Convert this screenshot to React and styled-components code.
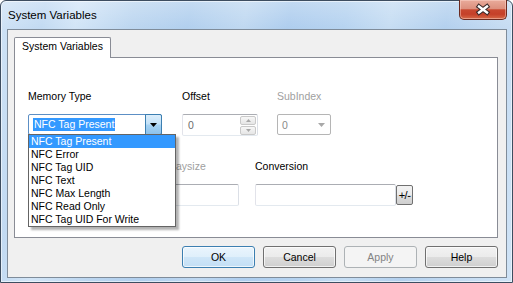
import React from "react";
import styled, { createGlobalStyle } from "styled-components";

const Global = createGlobalStyle`
  html, body { margin: 0; padding: 0; background: #ffffff; }
  body { font-family: "Liberation Sans", Arial, sans-serif; }
  * { box-sizing: border-box; }
`;

const Window = styled.div`
  position: relative;
  width: 513px;
  height: 283px;
  border: 1px solid #3d4d60;
  border-radius: 6px 6px 0 0;
  padding: 0 5px 4px 6px;
  display: flex;
  flex-direction: column;
  background:
    linear-gradient(180deg, rgba(255,255,255,0.25) 0px, rgba(255,255,255,0) 28px),
    linear-gradient(100deg,
      #cfe3f6 0%, #c2daf2 8%, #d2e5f7 14%, #bcd6f0 24%, #b1cfee 34%,
      #bfd8f1 44%, #aecdee 52%, #b6d3f0 62%, #c6ddf3 70%, #b3d0ee 80%, #c4dbf2 90%, #cfe3f6 100%);
  box-shadow: inset 0 0 0 1px rgba(255,255,255,0.55);
  font-size: 10.5px;
  color: #000;
`;

const TitleBar = styled.div`
  height: 28px;
  flex: none;
  display: flex;
  align-items: center;
  padding-left: 1px;
  font-size: 11.5px;
  color: #000;
`;

const CloseButton = styled.div`
  position: absolute;
  top: -1px;
  right: 5px;
  width: 48px;
  height: 20px;
  border: 1px solid #6b2a20;
  border-top: none;
  border-radius: 0 0 5px 5px;
  background: linear-gradient(180deg, #e9ab9b 0%, #dd907e 45%, #c8482f 52%, #c54029 75%, #d66a48 100%);
  box-shadow: inset 0 0 0 1px rgba(255, 220, 210, 0.45);
  display: flex;
  align-items: center;
  justify-content: center;
`;

const Client = styled.div`
  flex: 1;
  border: 1px solid #7f8c9a;
  background: #f0f0f0;
  display: flex;
  flex-direction: column;
  padding: 7px 8px 9px 6px;
`;

const Tab = styled.div`
  flex: 1;
  display: flex;
  flex-direction: column;
`;

const TabHeader = styled.div`
  align-self: flex-start;
  position: relative;
  z-index: 1;
  width: 97px;
  height: 21px;
  margin-bottom: -1px;
  border: 1px solid #898c95;
  border-bottom: none;
  border-radius: 2px 2px 0 0;
  background: #ffffff;
  padding: 2px 0 0 7px;
  line-height: 13px;
`;

const Panel = styled.div`
  flex: 1;
  border: 1px solid #898c95;
  background: #ffffff;
  padding: 32px 0 0 13px;
  display: flex;
  flex-direction: column;
`;

const Row = styled.div`
  display: flex;
  align-items: flex-start;
  margin-top: ${(p) => p.$top || 0}px;
`;

const Field = styled.div`
  position: relative;
  display: flex;
  flex-direction: column;
  width: ${(p) => p.$w}px;
  margin-left: ${(p) => p.$ml || 0}px;
`;

const Label = styled.div`
  line-height: 13px;
  height: 13px;
  margin-bottom: 11px;
  white-space: nowrap;
  color: ${(p) => (p.$disabled ? "#a0a0a0" : "#000")};
`;

const Combo = styled.div`
  position: relative;
  height: 21px;
  border: 1px solid ${(p) => (p.$disabled ? "#b5b5b5" : "#5c8fc5")};
  border-radius: 2px;
  background: #fff;
  display: flex;
  align-items: center;
  padding-left: 4px;
  color: ${(p) => (p.$disabled ? "#8a8a8a" : "#000")};
`;

const Selected = styled.span`
  background: #3399ff;
  color: #fff;
  line-height: 13px;
  padding: 0 1px;
`;

const ComboButton = styled.div`
  position: absolute;
  top: -1px;
  right: -1px;
  width: 17px;
  height: 21px;
  border: 1px solid #3c7fb1;
  border-radius: 0 2px 2px 0;
  background: linear-gradient(180deg, #dceefb 0%, #c2e1f8 48%, #a7d3f3 52%, #8cc2ec 100%);
  display: flex;
  align-items: center;
  justify-content: center;
`;

const PlainArrow = styled.div`
  position: absolute;
  right: 5px;
  top: 8px;
  display: flex;
`;

const DropList = styled.div`
  position: absolute;
  z-index: 5;
  top: 44px;
  left: 0;
  width: 148px;
  border: 1px solid #646464;
  background: #fff;
  box-shadow: 3px 3px 2px rgba(0, 0, 0, 0.3);
`;

const Item = styled.div`
  height: 13px;
  line-height: 13px;
  padding-left: 2px;
  white-space: nowrap;
  background: ${(p) => (p.$active ? "#3399ff" : "transparent")};
  color: ${(p) => (p.$active ? "#fff" : "#000")};
`;

const TextBox = styled.div`
  position: relative;
  height: 22px;
  border: 1px solid #abadb3;
  border-color: #abadb3 #dbdfe6 #e3e9ef #e2e3ea;
  border-radius: 2px;
  background: #fff;
  display: flex;
  align-items: center;
  padding-left: 5px;
  color: #6d6d6d;
  width: ${(p) => (p.$w ? p.$w + "px" : "auto")};
`;

const Spin = styled.div`
  position: absolute;
  right: 1px;
  top: 1px;
  width: 16px;
  display: flex;
  flex-direction: column;
  gap: 1px;
`;

const SpinBtn = styled.div`
  height: 9px;
  border: 1px solid #c9c9c9;
  border-radius: 2px;
  background: linear-gradient(180deg, #f7f7f7, #e6e6e6);
  display: flex;
  align-items: center;
  justify-content: center;
`;

const InputGroup = styled.div`
  display: flex;
  align-items: center;
`;

const SmallButton = styled.div`
  width: 17px;
  height: 20px;
  border: 1px solid #707070;
  border-radius: 2px;
  background: linear-gradient(180deg, #f2f2f2 0%, #ebebeb 50%, #dddddd 50%, #cfcfcf 100%);
  display: flex;
  align-items: center;
  justify-content: center;
  font-size: 11px;
  letter-spacing: -0.5px;
`;

const ButtonRow = styled.div`
  flex: none;
  display: flex;
  justify-content: flex-end;
  gap: 8px;
  margin-top: 8px;
`;

const Button = styled.div`
  width: 73px;
  height: 22px;
  border: 1px solid ${(p) => (p.$variant === "default" ? "#3c7fb1" : p.$variant === "disabled" ? "#adb2b5" : "#707070")};
  border-radius: 3px;
  background: ${(p) =>
    p.$variant === "default"
      ? "linear-gradient(180deg, #eaf5fd 0%, #dfeffb 50%, #cfe6f8 50%, #c3dff5 100%)"
      : p.$variant === "disabled"
      ? "#f4f4f4"
      : "linear-gradient(180deg, #f2f2f2 0%, #ebebeb 50%, #dddddd 50%, #cfcfcf 100%)"};
  box-shadow: inset 0 0 0 1px ${(p) => (p.$variant === "disabled" ? "transparent" : "rgba(255,255,255,0.7)")};
  color: ${(p) => (p.$variant === "disabled" ? "#838383" : "#000")};
  display: flex;
  align-items: center;
  justify-content: center;
`;

const Tri = ({ color = "#000", w = 7, h = 4, up }) => (
  <svg width={w} height={h} viewBox={`0 0 ${w} ${h}`}>
    <polygon points={up ? `0,${h} ${w},${h} ${w / 2},0` : `0,0 ${w},0 ${w / 2},${h}`} fill={color} />
  </svg>
);

const items = [
  "NFC Tag Present",
  "NFC Error",
  "NFC Tag UID",
  "NFC Text",
  "NFC Max Length",
  "NFC Read Only",
  "NFC Tag UID For Write",
];

export default function App() {
  return (
    <>
      <Global />
      <Window>
        <TitleBar>System Variables</TitleBar>
        <CloseButton>
          <svg width="16" height="13" viewBox="-8 -6.5 16 13">
            <path d="M-4,-3 L4,3 M4,-3 L-4,3" stroke="#3a2a2a" strokeWidth="4.6" strokeLinecap="square" />
            <path d="M-4,-3 L4,3 M4,-3 L-4,3" stroke="#ffffff" strokeWidth="2.4" strokeLinecap="square" />
          </svg>
        </CloseButton>
        <Client>
          <Tab>
            <TabHeader>System Variables</TabHeader>
            <Panel>
              <Row>
                <Field $w={134}>
                  <Label>Memory Type</Label>
                  <Combo>
                    <Selected>NFC Tag Present</Selected>
                    <ComboButton>
                      <Tri />
                    </ComboButton>
                  </Combo>
                  <DropList>
                    {items.map((t, i) => (
                      <Item key={t} $active={i === 0}>
                        {t}
                      </Item>
                    ))}
                  </DropList>
                </Field>
                <Field $w={76} $ml={20}>
                  <Label>Offset</Label>
                  <TextBox>
                    0
                    <Spin>
                      <SpinBtn>
                        <Tri color="#a8a8a8" w={5} h={3} up />
                      </SpinBtn>
                      <SpinBtn>
                        <Tri color="#a8a8a8" w={5} h={3} />
                      </SpinBtn>
                    </Spin>
                  </TextBox>
                </Field>
                <Field $w={54} $ml={19}>
                  <Label $disabled>SubIndex</Label>
                  <Combo $disabled>
                    0
                    <PlainArrow>
                      <Tri color="#a8a8a8" />
                    </PlainArrow>
                  </Combo>
                </Field>
              </Row>
              <Row $top={24}>
                <Field $w={114}>
                  <Label />
                  <TextBox />
                </Field>
                <Field $w={77} $ml={20}>
                  <Label $disabled>Arraysize</Label>
                  <TextBox />
                </Field>
                <Field $w={158} $ml={16}>
                  <Label>Conversion</Label>
                  <InputGroup>
                    <TextBox $w={141} />
                    <SmallButton>+/-</SmallButton>
                  </InputGroup>
                </Field>
              </Row>
            </Panel>
          </Tab>
          <ButtonRow>
            <Button $variant="default">OK</Button>
            <Button>Cancel</Button>
            <Button $variant="disabled">Apply</Button>
            <Button>Help</Button>
          </ButtonRow>
        </Client>
      </Window>
    </>
  );
}
